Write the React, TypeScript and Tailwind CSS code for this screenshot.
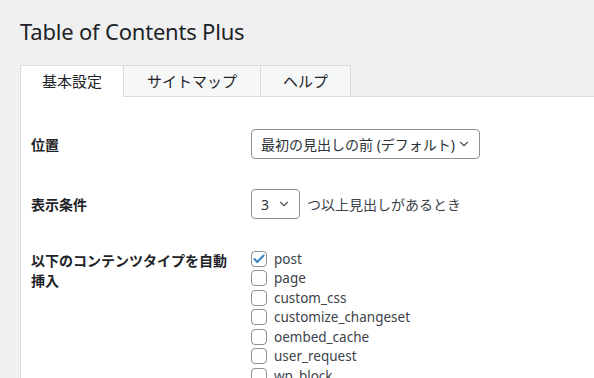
import { Check, ChevronDown } from "lucide-react";

const POST_TYPES = [
  { name: "post", checked: true },
  { name: "page", checked: false },
  { name: "custom_css", checked: false },
  { name: "customize_changeset", checked: false },
  { name: "oembed_cache", checked: false },
  { name: "user_request", checked: false },
  { name: "wp_block", checked: false },
];

const FONT = "font-['Noto_Sans','Noto_Sans_CJK_JP',sans-serif]";

function Select({ label, width }: { label: string; width: string }) {
  return (
    <div
      className={`flex items-center justify-between h-[30px] ${width} pl-[9px] pr-[8px] bg-white border border-[#8c8f94] rounded-[4px] text-[14px] text-[#2c3338]`}
    >
      <span className="whitespace-nowrap">{label}</span>
      <ChevronDown className="w-[14px] h-[14px] text-[#50575e]" strokeWidth={2} />
    </div>
  );
}

export default function App() {
  return (
    <div className={`min-h-screen bg-[#f0f0f1] pl-5 overflow-hidden ${FONT}`}>
      <h1 className="pt-[16px] text-[22px] leading-[30px] text-[#1d2327] tracking-[-0.2px]">
        Table of Contents Plus
      </h1>

      {/* tabs */}
      <div className="mt-[19px] flex border-b border-[#dcdcde] h-[32px]">
        <div className="w-[104px] h-[32px] -mb-px flex items-center justify-center bg-white border border-b-0 border-[#dcdcde] text-[15px] text-[#1d2327]">
          基本設定
        </div>
        <div className="w-[138px] h-[31px] -ml-px flex items-center justify-center bg-[#f6f7f7] border border-b-0 border-[#dcdcde] text-[15px] text-[#1d2327]">
          サイトマップ
        </div>
        <div className="w-[91px] h-[31px] -ml-px flex items-center justify-center bg-[#f6f7f7] border border-b-0 border-[#dcdcde] text-[15px] text-[#1d2327]">
          ヘルプ
        </div>
      </div>

      {/* panel */}
      <div className="bg-white border-l border-[#dcdcde] pl-[10px] pb-10">
        <div className="pt-[32px] grid grid-cols-[220px_1fr] items-center">
          <div className="text-[14px] font-bold text-[#1d2327]">位置</div>
          <Select label="最初の見出しの前 (デフォルト)" width="w-[229px]" />
        </div>

        <div className="mt-[30px] grid grid-cols-[220px_1fr] items-center">
          <div className="text-[14px] font-bold text-[#1d2327]">表示条件</div>
          <div className="flex items-center gap-[7px]">
            <Select label="3" width="w-[49px]" />
            <span className="text-[14px] text-[#3c434a]">つ以上見出しがあるとき</span>
          </div>
        </div>

        <div className="mt-[30px] grid grid-cols-[220px_1fr] items-start">
          <div className="mt-[2px] w-[200px] text-[14px] leading-5 font-bold text-[#1d2327]">
            以下のコンテンツタイプを自動挿入
          </div>
          <div className="flex flex-col">
            {POST_TYPES.map((t) => (
              <div key={t.name} className="flex items-center h-[19.5px] gap-[7px]">
                <div className="w-4 h-4 rounded-[4px] border border-[#8c8f94] bg-white flex items-center justify-center shrink-0">
                  {t.checked && (
                    <Check className="w-[14px] h-[14px] text-[#3582c4]" strokeWidth={3.5} />
                  )}
                </div>
                <span className="text-[13.5px] leading-5 text-[#3c434a]">{t.name}</span>
              </div>
            ))}
          </div>
        </div>
      </div>
    </div>
  );
}
